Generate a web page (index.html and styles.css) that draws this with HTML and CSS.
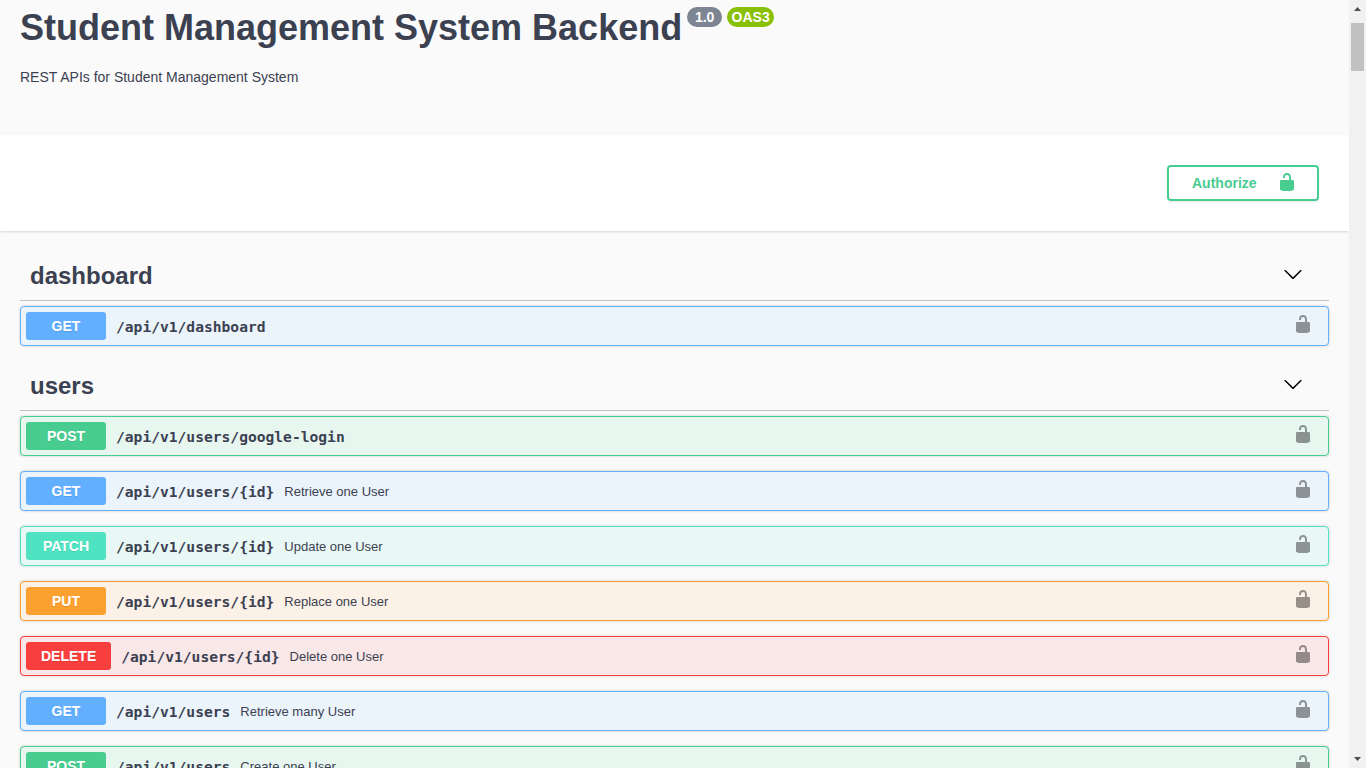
FILE: index.html
```html
<!DOCTYPE html>
<html lang="en">
<head>
<meta charset="utf-8">
<title>Student Management System Backend</title>
<link rel="stylesheet" href="styles.css">
</head>
<body>
<svg class="defs" width="0" height="0">
  <symbol id="unlocked" viewBox="0 0 20 20"><path d="M15.8 8H14V5.6C14 2.703 12.665 1 10 1 7.334 1 6 2.703 6 5.6V6h2v-.801C8 3.754 8.797 3 10 3c1.203 0 2 .754 2 2.199V8H4c-.553 0-1 .646-1 1.199V17c0 .549.428 1.139.951 1.307l1.197.387C5.672 18.861 6.55 19 7.1 19h5.8c.549 0 1.428-.139 1.951-.307l1.196-.387c.524-.167.953-.757.953-1.306V9.199C17 8.646 16.352 8 15.8 8z"/></symbol>
  <symbol id="arrow" viewBox="0 0 20 20"><path d="M17.418 6.109c.272-.268.709-.268.979 0s.271.701 0 .969l-7.908 7.83c-.27.268-.707.268-.979 0l-7.908-7.83c-.27-.268-.27-.701 0-.969.271-.268.709-.268.979 0L10 13.25l7.418-7.141z"/></symbol>
</svg>
<div class="app">
  <main class="page">
    <header class="info">
      <div class="title-row">
        <h1 class="title">Student Management System Backend</h1>
        <span class="pill version">1.0</span>
        <span class="pill oas">OAS3</span>
      </div>
      <p class="description">REST APIs for Student Management System</p>
    </header>
    <section class="auth">
      <button class="authorize"><span>Authorize</span><svg class="icon"><use href="#unlocked"/></svg></button>
    </section>
    <div class="sections">
      <section class="tag">
        <h2 class="tag-head"><span>dashboard</span><svg class="icon"><use href="#arrow"/></svg></h2>
        <div class="ops">
          <div class="op get"><span class="method">GET</span><span class="path">/api/v1/dashboard</span><svg class="icon lock"><use href="#unlocked"/></svg></div>
        </div>
      </section>
      <section class="tag">
        <h2 class="tag-head"><span>users</span><svg class="icon"><use href="#arrow"/></svg></h2>
        <div class="ops">
          <div class="op post"><span class="method">POST</span><span class="path">/api/v1/users/google-login</span><svg class="icon lock"><use href="#unlocked"/></svg></div>
          <div class="op get"><span class="method">GET</span><span class="path">/api/v1/users/{id}</span><span class="summary">Retrieve one User</span><svg class="icon lock"><use href="#unlocked"/></svg></div>
          <div class="op patch"><span class="method">PATCH</span><span class="path">/api/v1/users/{id}</span><span class="summary">Update one User</span><svg class="icon lock"><use href="#unlocked"/></svg></div>
          <div class="op put"><span class="method">PUT</span><span class="path">/api/v1/users/{id}</span><span class="summary">Replace one User</span><svg class="icon lock"><use href="#unlocked"/></svg></div>
          <div class="op delete"><span class="method">DELETE</span><span class="path">/api/v1/users/{id}</span><span class="summary">Delete one User</span><svg class="icon lock"><use href="#unlocked"/></svg></div>
          <div class="op get"><span class="method">GET</span><span class="path">/api/v1/users</span><span class="summary">Retrieve many User</span><svg class="icon lock"><use href="#unlocked"/></svg></div>
          <div class="op post"><span class="method">POST</span><span class="path">/api/v1/users</span><span class="summary">Create one User</span><svg class="icon lock"><use href="#unlocked"/></svg></div>
        </div>
      </section>
    </div>
  </main>
  <div class="scrollbar">
    <svg class="scroll-arrow" viewBox="0 0 17 17"><path d="M5 11h7L8.5 7z"/></svg>
    <div class="thumb"></div>
    <svg class="scroll-arrow down" viewBox="0 0 17 17"><path d="M5 6h7L8.5 10z"/></svg>
  </div>
</div>
</body>
</html>
```
FILE: styles.css
```css
* { box-sizing: border-box; }
body {
  margin: 0;
  height: 768px;
  overflow: hidden;
  background: #fafafa;
  color: #3b4151;
  font-family: "Liberation Sans", Arial, sans-serif;
}
.defs { display: block; }
.app { display: flex; height: 768px; overflow: hidden; }
.page { flex: 1; min-width: 0; }
.icon { width: 20px; height: 20px; flex: none; }

.info { height: 135px; padding: 7px 20px 0; }
.title-row { display: flex; align-items: flex-start; gap: 5px; }
.title { margin: 0; font-size: 36px; line-height: 41px; white-space: nowrap; }
.pill {
  height: 20px;
  border-radius: 10px;
  color: #fff;
  font-size: 14px;
  font-weight: 700;
  line-height: 20px;
  text-align: center;
}
.version { width: 35px; background: #7d8492; }
.oas { width: 47px; background: #89bf04; }
.description { margin: 21px 0 0; font-size: 14px; line-height: 16px; }

.auth {
  height: 96px;
  padding: 30px;
  display: flex;
  justify-content: flex-end;
  background: #fff;
  box-shadow: 0 1px 2px rgba(0, 0, 0, .15);
}
.authorize {
  width: 152px;
  height: 36px;
  padding: 0 20px 0 23px;
  display: flex;
  align-items: center;
  justify-content: space-between;
  border: 2px solid #49cc90;
  border-radius: 4px;
  background: transparent;
  box-shadow: 0 1px 2px rgba(0, 0, 0, .1);
  color: #49cc90;
  fill: #49cc90;
  font: 700 14px "Liberation Sans", Arial, sans-serif;
}
.authorize .icon { margin-bottom: 2px; }

.sections { padding: 20px 20px 0; }
.tag-head {
  height: 50px;
  margin: 0 0 5px;
  padding: 0 26px 0 10px;
  display: flex;
  align-items: center;
  justify-content: space-between;
  border-bottom: 1px solid rgba(59, 65, 81, .3);
  font-size: 24px;
  line-height: 28px;
}
.tag-head span { padding-top: 1px; }
.tag-head .icon { margin-bottom: 3px; fill: #000; }
.ops { display: flex; flex-direction: column; gap: 15px; padding-bottom: 15px; }
.op {
  height: 40px;
  padding: 5px;
  display: flex;
  align-items: center;
  gap: 10px;
  border: 1px solid;
  border-radius: 4px;
  box-shadow: 0 0 3px rgba(0, 0, 0, .19);
}
.method {
  min-width: 80px;
  height: 28px;
  padding: 0 15px;
  border-radius: 3px;
  color: #fff;
  font-size: 14px;
  font-weight: 700;
  line-height: 28px;
  text-align: center;
  text-shadow: 0 1px 0 rgba(0, 0, 0, .1);
}
.path {
  font: 700 14.62px/20px "DejaVu Sans Mono", monospace;
  padding-top: 1px;
}
.summary { font-size: 13px; line-height: 15px; }
.lock { margin: 0 10px 4px auto; fill: #000; opacity: .4; }

.get { border-color: #61affe; background: #ebf3fb; }
.get .method { background: #61affe; }
.post { border-color: #49cc90; background: #e8f6f0; }
.post .method { background: #49cc90; }
.patch { border-color: #50e3c2; background: #e9f8f5; }
.patch .method { background: #50e3c2; }
.put { border-color: #fca130; background: #fbf1e6; }
.put .method { background: #fca130; }
.delete { border-color: #f93e3e; background: #fae7e7; }
.delete .method { background: #f93e3e; }

.scrollbar {
  width: 17px;
  display: flex;
  flex-direction: column;
  align-items: center;
  background: #f1f1f1;
}
.scroll-arrow { width: 17px; height: 17px; fill: #505050; }
.thumb { width: 13px; height: 48px; margin-top: 6px; background: #c1c1c1; }
.down { margin-top: auto; }
```
